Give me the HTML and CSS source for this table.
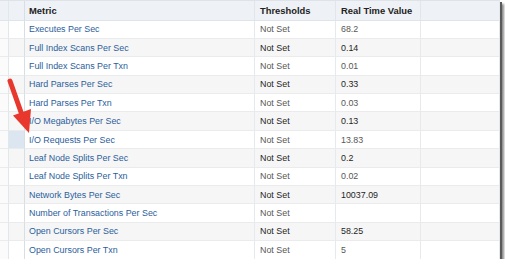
FILE: index.html
```html
<!DOCTYPE html>
<html>
<head>
<meta charset="utf-8">
<link rel="stylesheet" href="styles.css">
</head>
<body>
<div class="shot">
  <div class="grid">
    <div class="row head">
      <div class="c edge"></div><div class="c sel"></div>
      <div class="c metric">Metric</div>
      <div class="c thr">Thresholds</div>
      <div class="c val">Real Time Value</div>
      <div class="c pad"></div>
    </div>
    <div class="row"><div class="c edge"></div><div class="c sel"></div><div class="c metric"><a>Executes Per Sec</a></div><div class="c thr">Not Set</div><div class="c val">68.2</div><div class="c pad"></div></div>
    <div class="row alt"><div class="c edge"></div><div class="c sel"></div><div class="c metric"><a>Full Index Scans Per Sec</a></div><div class="c thr">Not Set</div><div class="c val">0.14</div><div class="c pad"></div></div>
    <div class="row"><div class="c edge"></div><div class="c sel"></div><div class="c metric"><a>Full Index Scans Per Txn</a></div><div class="c thr">Not Set</div><div class="c val">0.01</div><div class="c pad"></div></div>
    <div class="row alt"><div class="c edge"></div><div class="c sel"></div><div class="c metric"><a>Hard Parses Per Sec</a></div><div class="c thr">Not Set</div><div class="c val">0.33</div><div class="c pad"></div></div>
    <div class="row"><div class="c edge"></div><div class="c sel"></div><div class="c metric"><a>Hard Parses Per Txn</a></div><div class="c thr">Not Set</div><div class="c val">0.03</div><div class="c pad"></div></div>
    <div class="row alt"><div class="c edge"></div><div class="c sel"></div><div class="c metric"><a>I/O Megabytes Per Sec</a></div><div class="c thr">Not Set</div><div class="c val">0.13</div><div class="c pad"></div></div>
    <div class="row"><div class="c edge"></div><div class="c sel picked"></div><div class="c metric"><a>I/O Requests Per Sec</a></div><div class="c thr">Not Set</div><div class="c val">13.83</div><div class="c pad"></div></div>
    <div class="row alt"><div class="c edge"></div><div class="c sel"></div><div class="c metric"><a>Leaf Node Splits Per Sec</a></div><div class="c thr">Not Set</div><div class="c val">0.2</div><div class="c pad"></div></div>
    <div class="row"><div class="c edge"></div><div class="c sel"></div><div class="c metric"><a>Leaf Node Splits Per Txn</a></div><div class="c thr">Not Set</div><div class="c val">0.02</div><div class="c pad"></div></div>
    <div class="row alt"><div class="c edge"></div><div class="c sel"></div><div class="c metric"><a>Network Bytes Per Sec</a></div><div class="c thr">Not Set</div><div class="c val">10037.09</div><div class="c pad"></div></div>
    <div class="row"><div class="c edge"></div><div class="c sel"></div><div class="c metric"><a>Number of Transactions Per Sec</a></div><div class="c thr">Not Set</div><div class="c val"></div><div class="c pad"></div></div>
    <div class="row alt"><div class="c edge"></div><div class="c sel"></div><div class="c metric"><a>Open Cursors Per Sec</a></div><div class="c thr">Not Set</div><div class="c val">58.25</div><div class="c pad"></div></div>
    <div class="row"><div class="c edge"></div><div class="c sel"></div><div class="c metric"><a>Open Cursors Per Txn</a></div><div class="c thr">Not Set</div><div class="c val">5</div><div class="c pad"></div></div>
  </div>
  <svg class="arrow" width="40" height="140" viewBox="0 0 40 140">
    <line x1="10" y1="81" x2="22" y2="115" stroke="#e8372c" stroke-width="5" stroke-linecap="round"/>
    <polygon points="29,133 13,115.5 31,109" fill="#e8372c"/>
  </svg>
</div>
</body>
</html>
```

FILE: styles.css
```css
html, body {
  margin: 0;
  padding: 0;
  background: #ffffff;
}
.shot {
  position: relative;
  width: 500px;
  height: 259px;
  background: #ffffff;
  box-shadow: 2px 2px 0 #5a5a5a, 4px 4px 2px rgba(0,0,0,0.45);
  overflow: hidden;
  font-family: "Liberation Sans", Arial, sans-serif;
}
.grid {
  display: flex;
  flex-direction: column;
  border-top: 1px solid #dde3e9;
  border-right: 1px solid #e6e9ec;
}
.row {
  display: grid;
  grid-template-columns: 9px 16px 230px 81px 85px 1fr;
  height: 18.4px;
  background: #ffffff;
  color: #575757;
  font-size: 8.9px;
}
.row.alt {
  background: #f6f6f6;
  color: #1e1e1e;
}
.row.head {
  height: 19.5px;
  background: #eef1f5;
  color: #222;
  font-weight: bold;
  font-size: 9.4px;
}
.c {
  display: flex;
  align-items: center;
  border-bottom: 1px solid #e9ebed;
  border-right: 1px solid #e7eaed;
  box-sizing: border-box;
  white-space: nowrap;
  padding-left: 4px;
}
.head .c {
  border-bottom: 1px solid #dfe4ea;
  border-right: 1px solid #e1e6eb;
}
.c.edge {
  padding: 0;
  background: #fbfbfc;
  border-right: 1px solid #e2e7ec;
}
.c.sel {
  padding: 0;
  border-right: 1px solid #d6dee6;
}
.c.sel.picked {
  background: #dce6f1;
}
.head .c.edge, .head .c.sel {
  background: #eef1f5;
}
.c.thr {
  padding-left: 5px;
}
.c.val {
  padding-left: 5px;
}
.c.pad {
  border-right: none;
}
.metric a {
  color: #2b609b;
  text-decoration: none;
}
.arrow {
  position: absolute;
  left: 0;
  top: 0;
}
```
